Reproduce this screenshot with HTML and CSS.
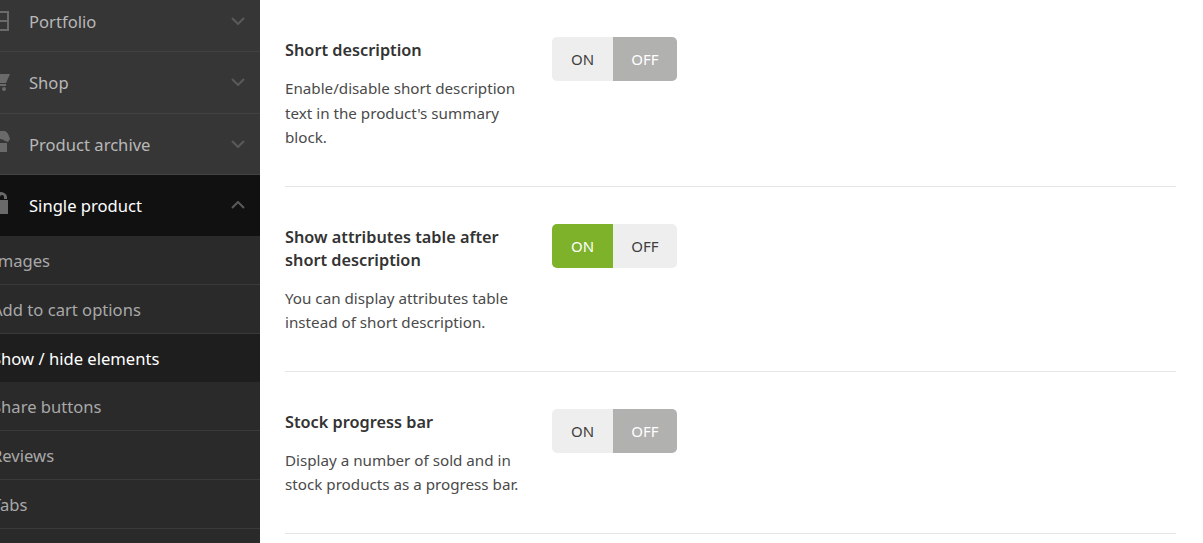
FILE: index.html
```html
<!DOCTYPE html>
<html lang="en">

<head>
    <meta charset="UTF-8">
    <meta name="viewport" content="width=device-width, initial-scale=1.0">
    <title>Single product</title>

    <link rel="stylesheet" href="styles.css">
</head>

<body>
    <div class="sidebar">
        <ul class="menu">
            <li class="menu-item">
                <svg class="menu-icon" viewBox="0 0 20 20"><path fill="#6a6a6a" fill-rule="evenodd" d="M0 0h20v20H0zM2 2v7h7V2zM11 2v7h7V2zM2 11v7h7v-7zM11 11v7h7v-7z"/></svg>
                <span>Portfolio</span>
                <svg class="chevron" viewBox="0 0 14 8"><path d="M1 1l6 6 6-6" fill="none" stroke="#5a5a5a" stroke-width="2"/></svg>
            </li>
            <li class="menu-item">
                <svg class="menu-icon" viewBox="0 0 20 20"><path fill="#6a6a6a" d="M2 2h19l-4 9H5zM5 12h12v2H5z"/><circle cx="7" cy="17" r="2" fill="#6a6a6a"/><circle cx="15" cy="17" r="2" fill="#6a6a6a"/></svg>
                <span>Shop</span>
                <svg class="chevron" viewBox="0 0 14 8"><path d="M1 1l6 6 6-6" fill="none" stroke="#5a5a5a" stroke-width="2"/></svg>
            </li>
            <li class="menu-item">
                <svg class="menu-icon" viewBox="0 0 20 20"><path fill="#6a6a6a" d="M4 -3h12q3 1 5 8l-2 3-3-1q-2-2-5-2-3 0-5 2l-3 1-2-3q1-7 3-8zM6 9h3v9H6zM11 9h7v9h-7z"/></svg>
                <span>Product archive</span>
                <svg class="chevron" viewBox="0 0 14 8"><path d="M1 1l6 6 6-6" fill="none" stroke="#5a5a5a" stroke-width="2"/></svg>
            </li>
            <li class="menu-item menu-item-open">
                <svg class="menu-icon" viewBox="0 0 20 20"><path fill="#6a6a6a" fill-rule="evenodd" d="M0 5h19v14H0zM4 4V2a7 5 0 0 1 14 0v2h-3V2a2 2 0 0 0-4 0v2z"/></svg>
                <span>Single product</span>
                <svg class="chevron" viewBox="0 0 14 8"><path d="M1 7l6-6 6 6" fill="none" stroke="#5a5a5a" stroke-width="2"/></svg>
            </li>
        </ul>
        <ul class="submenu">
            <li>Images</li>
            <li>Add to cart options</li>
            <li class="current">Show / hide elements</li>
            <li>Share buttons</li>
            <li>Reviews</li>
            <li>Tabs</li>
        </ul>
    </div>

    <div class="content">
        <div class="option">
            <div class="option-text">
                <h3>Short description</h3>
                <p>Enable/disable short description text in the product's summary block.</p>
            </div>
            <div class="switch">
                <span class="switch-on">ON</span>
                <span class="switch-off active-off">OFF</span>
            </div>
        </div>
        <div class="option">
            <div class="option-text">
                <h3>Show attributes table after short description</h3>
                <p>You can display attributes table instead of short description.</p>
            </div>
            <div class="switch">
                <span class="switch-on active-on">ON</span>
                <span class="switch-off">OFF</span>
            </div>
        </div>
        <div class="option">
            <div class="option-text">
                <h3>Stock progress bar</h3>
                <p>Display a number of sold and in stock products as a progress bar.</p>
            </div>
            <div class="switch">
                <span class="switch-on">ON</span>
                <span class="switch-off active-off">OFF</span>
            </div>
        </div>
    </div>
</body>

</html>
```

FILE: styles.css
```css
html, body {
    height: 100%;
}

body {
    font-family: "Noto Sans", sans-serif;
    margin: 0;
    padding: 0;
    background-color: #fff;
    color: #3e3e3e;
    display: flex;
    overflow: hidden;
}

ul {
    list-style: none;
    margin: 0;
    padding: 0;
}

.sidebar {
    width: 260px;
    flex-shrink: 0;
    overflow: hidden;
    background-color: #2a2a2a;
}

.menu {
    margin-left: -11px;
    margin-top: -9.3px;
}

.menu-item {
    display: flex;
    align-items: center;
    height: 60.5px;
    padding-right: 15px;
    font-size: 16.6px;
    color: #b8b8b8;
    background-color: #363636;
    border-bottom: 1px solid #424242;
}

.menu-item span {
    flex: 1;
    padding-top: 1px;
}

.menu-icon {
    width: 20px;
    height: 20px;
    margin: 0 20px 0 0;
    flex-shrink: 0;
    overflow: visible;
}

.chevron {
    width: 14px;
    height: 8px;
}

.menu-item-open {
    color: #fff;
    background-color: #111;
    border-bottom: 0;
}

.submenu {
    margin-top: 0.3px;
}

.submenu li {
    height: 47.8px;
    line-height: 50px;
    margin-left: -9px;
    padding-left: 1px;
    font-size: 16.6px;
    color: #a8a8a8;
    border-bottom: 1px solid #3a3a3a;
}

.submenu .current {
    color: #fff;
    background-color: #1e1e1e;
    border-bottom-color: #1e1e1e;
}

.content {
    flex: 1;
    padding-left: 25px;
    padding-right: 27px;
}

.option {
    display: flex;
    gap: 27px;
    padding: 37px 0 36px;
    border-bottom: 1px solid #e6e6e6;
}

.option-text {
    width: 240px;
    flex-shrink: 0;
}

.option-text h3 {
    margin: 0 0 14px;
    padding-top: 2px;
    font-size: 16.3px;
    font-weight: 600;
    line-height: 23px;
    color: #333;
}

.option-text p {
    margin: 0;
    font-size: 15.2px;
    line-height: 24.5px;
    color: #4a4a4a;
}

.switch {
    display: flex;
    height: 44px;
    width: 125px;
    border-radius: 5px;
    overflow: hidden;
    font-size: 15px;
    background-color: #eee;
    color: #3e3e3e;
}

.switch span {
    display: flex;
    align-items: center;
    justify-content: center;
}

.switch-on {
    width: 61px;
}

.switch-off {
    width: 64px;
}

.active-on {
    background-color: #7eb22a;
    color: #fff;
}

.active-off {
    background-color: #b1b1af;
    color: #fff;
}
```
